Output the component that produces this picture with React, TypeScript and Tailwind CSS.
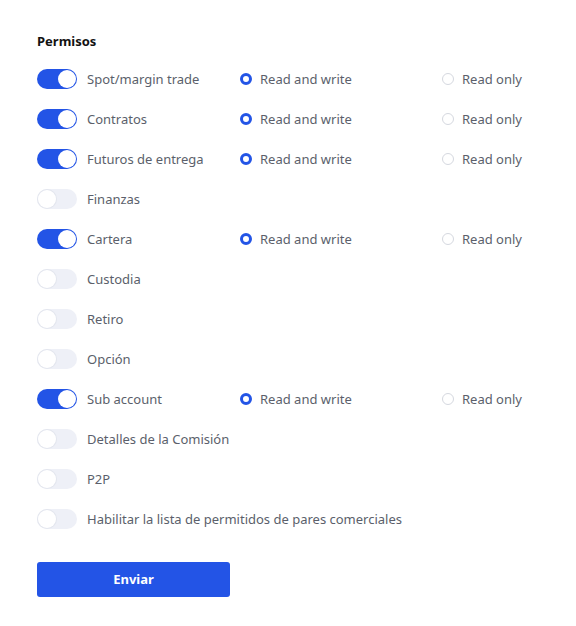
import { useState } from "react"

type Perm = { label: string; on: boolean }

const initial: Perm[] = [
  { label: "Spot/margin trade", on: true },
  { label: "Contratos", on: true },
  { label: "Futuros de entrega", on: true },
  { label: "Finanzas", on: false },
  { label: "Cartera", on: true },
  { label: "Custodia", on: false },
  { label: "Retiro", on: false },
  { label: "Opción", on: false },
  { label: "Sub account", on: true },
  { label: "Detalles de la Comisión", on: false },
  { label: "P2P", on: false },
  { label: "Habilitar la lista de permitidos de pares comerciales", on: false },
]

function Toggle({ on, onClick }: { on: boolean; onClick: () => void }) {
  return (
    <button
      onClick={onClick}
      className={`relative h-5 w-10 shrink-0 rounded-full ${on ? "bg-[#2354e6]" : "bg-[#eef0f7]"}`}
    >
      <span
        className={`absolute top-[1px] h-[18px] w-[18px] rounded-full bg-white ${
          on ? "left-[21px]" : "left-[1px] shadow-[0_0_0_1px_#e3e6ee]"
        }`}
      />
    </button>
  )
}

function Radio({ checked, label }: { checked: boolean; label: string }) {
  return (
    <div className="flex items-center gap-2">
      <span
        className={`h-3 w-3 rounded-full bg-white ${
          checked ? "border-[3.5px] border-[#2354e6]" : "border border-[#d5d8df]"
        }`}
      />
      <span className="pt-[2px] text-[13px] text-[#5b5f6b]">{label}</span>
    </div>
  )
}

export default function App() {
  const [perms, setPerms] = useState(initial)

  const toggle = (i: number) =>
    setPerms(perms.map((p, j) => (j === i ? { ...p, on: !p.on } : p)))

  return (
    <div className="min-h-[626px] w-[576px] bg-white pl-[37px] pt-[31px] font-['Noto_Sans',sans-serif]">
      <div className="mb-[8px] h-5 text-[13px] font-bold leading-5 text-[#121212]">Permisos</div>
      <div className="flex flex-col">
        {perms.map((p, i) => (
          <div key={p.label} className="flex h-10 items-center">
            <Toggle on={p.on} onClick={() => toggle(i)} />
            <span className="ml-[10px] w-[153px] shrink-0 whitespace-nowrap pt-[2px] text-[13px] text-[#5b5f6b]">
              {p.label}
            </span>
            {p.on && (
              <>
                <div className="w-[202px]">
                  <Radio checked label="Read and write" />
                </div>
                <Radio checked={false} label="Read only" />
              </>
            )}
          </div>
        ))}
      </div>
      <button className="mt-[23px] h-[35px] w-[193px] rounded-[3px] bg-[#2354e6] text-[13px] font-bold text-white">
        Enviar
      </button>
    </div>
  )
}
